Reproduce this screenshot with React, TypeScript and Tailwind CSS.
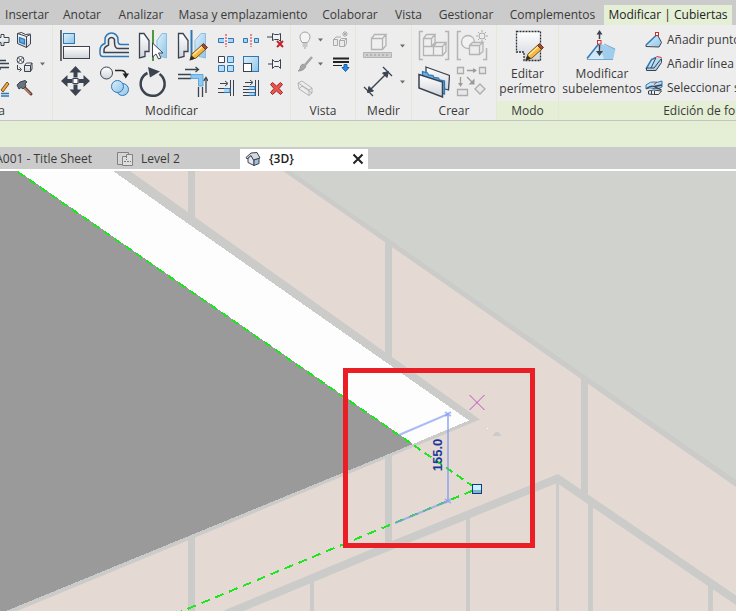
import type { ReactNode } from "react";

const INK = "#3b4350";
const BLUE = "#2f78b7";
const DIM = "#b4b4b4";

interface IconProps {
  size?: number;
  children: ReactNode;
}

function Icon({ size = 18, children }: IconProps) {
  return (
    <svg
      width={size}
      height={size}
      viewBox={`0 0 ${size} ${size}`}
      fill="none"
      aria-hidden="true"
      className="shrink-0"
    >
      {children}
    </svg>
  );
}

function Gradients() {
  return (
    <svg width="0" height="0" className="absolute" aria-hidden="true">
      <defs>
        <linearGradient id="sky" x1="0" y1="0" x2="1" y2="1">
          <stop offset="0" stopColor="#dff1fb" />
          <stop offset="1" stopColor="#8fc4e8" />
        </linearGradient>
        <linearGradient id="steel" x1="0" y1="0" x2="0" y2="1">
          <stop offset="0" stopColor="#ffffff" />
          <stop offset="1" stopColor="#cfd3da" />
        </linearGradient>
      </defs>
    </svg>
  );
}

function Pencil() {
  return (
    <g>
      <path d="M14 30l2-6L27 14l4 4-11 10z" fill="#f7b83b" stroke="#7a5418" />
      <path d="M17 25l10-9" stroke="#ffe9a8" strokeWidth="1.500" />
      <path d="M25.500 15.500l2-2 4 4-2 2z" fill="#a14a35" stroke="#6d3327" />
      <path d="M13.500 30.500l2-5 3.500 3z" fill="#2c2c2c" />
    </g>
  );
}

/* ---------- Modificar, large ---------- */

const AlignIcon = () => (
  <Icon size={32}>
    <path d="M2 0v31" stroke="#222" strokeWidth="1.300" />
    <rect x="4.500" y="3.500" width="11" height="10" fill="url(#sky)" stroke={BLUE} />
    <rect x="4.500" y="16.500" width="26" height="12" fill="url(#steel)" stroke={INK} />
  </Icon>
);

const OffsetIcon = () => (
  <Icon size={32}>
    <path
      d="M31 14.500H23Q20 14.500 20 11V9.500A6.500 6.500 0 0 0 7 9.500V13.500Q2 15 2 20.500V23Q2 26.500 5 26.500H31"
      stroke={BLUE}
      strokeWidth="1.500"
    />
    <path
      d="M31 18.500H20Q16.500 18.500 16.500 12V9.500A3.200 3.200 0 0 0 10.500 9.500V15Q6 17 6 20V22.500H31"
      stroke={INK}
      strokeWidth="1.500"
    />
  </Icon>
);

const MirrorPickIcon = () => (
  <Icon size={32}>
    <path d="M2.500 3.500H7l5 7v11H8v5l-5.500 1.500z" fill="url(#steel)" stroke={INK} strokeWidth="1.300" />
    <path d="M29.500 3.500H25l-5 7v11h4v5l5.500 1.500z" fill="url(#sky)" stroke="#8abde0" />
    <path d="M16 0v31" stroke="#4c9a3a" strokeWidth="2" />
    <path d="M15.500 13v14l3.500-3 2.500 5 2.500-1-2.500-5h4.500z" fill="#fff" stroke={INK} />
  </Icon>
);

const MirrorDrawIcon = () => (
  <Icon size={32}>
    <path d="M2.500 3.500H7l5 7v11H8v5l-5.500 1.500z" fill="url(#steel)" stroke={INK} strokeWidth="1.300" />
    <path d="M29.500 3.500H25l-6 7v11h4v5l6.500 1.500z" fill="url(#sky)" stroke="#8abde0" />
    <path d="M15.500 0v30" stroke={BLUE} strokeWidth="2" />
    <Pencil />
  </Icon>
);

const MoveIcon = () => (
  <Icon size={32}>
    <path
      d="M16.500 0l6 6.500h-4v5h-4v-5h-4zM16.500 30l6-6.500h-4v-5h-4v5h-4zM2 15l6.500-6v4h5v4h-5v4zM31 15l-6.500-6v4h-5v4h5v4z"
      fill={INK}
    />
    <rect x="14" y="12.500" width="5" height="5" fill="#fff" stroke={INK} />
  </Icon>
);

const CopyIcon = () => (
  <Icon size={32}>
    <circle cx="8.500" cy="7" r="6" fill="url(#steel)" stroke={INK} />
    <path d="M17 4.500h6q5 0 5 5" stroke="#222" strokeWidth="1.500" />
    <path d="M24.500 7.500h6.500l-3.200 5z" fill="#222" />
    <circle cx="24.500" cy="23.500" r="6" fill="url(#sky)" stroke={BLUE} />
    <circle cx="19.500" cy="20.500" r="6" fill="url(#sky)" stroke={BLUE} />
  </Icon>
);

const RotateIcon = () => (
  <Icon size={32}>
    <path d="M22.500 8A12 12 0 1 1 10.500 7" stroke={INK} strokeWidth="2.500" />
    <path d="M11 1l12 4.500-10 6z" fill={INK} />
  </Icon>
);

const TrimIcon = () => (
  <Icon size={32}>
    <path d="M9 3.500h13M2 8.500h13M2 12.500h13M22.500 21v10M26.500 21v10M30 27V12" stroke={INK} strokeWidth="1.300" />
    <path d="M19.500 1l3 2.500-3 2.500M27.500 15l2.500-3.500 2 3.500" stroke={INK} strokeWidth="1.300" />
    <path d="M15 8.500h12V20h-4.500v-7.500H15z" fill="#8fc7ee" stroke="#5ea9dd" />
  </Icon>
);

/* ---------- Modificar, small ---------- */

const SplitIcon = () => (
  <Icon>
    <path d="M9 3v13" stroke="#d3242c" strokeDasharray="2 1" />
    <path d="M7 7.500H1.500v4H7M11 7.500h5.500v4H11" fill="#a9d5f2" stroke={BLUE} />
  </Icon>
);

const SplitGapIcon = () => (
  <Icon>
    <path d="M9 3v13" stroke="#d3242c" strokeDasharray="2 1" />
    <path d="M5.500 7.500h-4v4h4zM12.500 7.500h4v4h-4z" fill="#a9d5f2" stroke={BLUE} />
  </Icon>
);

const UnpinIcon = () => (
  <Icon>
    <path d="M0 6h5M5.500 2.500v7l2-1h4l2 2v-8l-2 1h-4z" fill="#f1f1f1" stroke={INK} />
    <path d="M10 10l6 6M16 10l-6 6" stroke="#c32327" strokeWidth="2" />
  </Icon>
);

const ArrayIcon = () => (
  <Icon>
    <path d="M1.500 1.500h6v6h-6z" fill="#fff" stroke={INK} />
    <path d="M10.500 1.500h6v6h-6zM1.500 10.500h6v6h-6zM10.500 10.500h6v6h-6z" fill="#b9ddf4" stroke={BLUE} />
  </Icon>
);

const ScaleIcon = () => (
  <Icon>
    <rect x="1.500" y="1.500" width="15" height="15" fill="url(#sky)" stroke={BLUE} />
    <rect x="1.500" y="8.500" width="8" height="8" fill="#fff" stroke={INK} />
  </Icon>
);

const PinIcon = () => (
  <Icon>
    <path d="M1 9h4M5.500 4.500v9l2-2h4l2 2v-9l-2 2h-4z" fill="#f1f1f1" stroke={INK} />
  </Icon>
);

const TrimSingleIcon = () => (
  <Icon>
    <path d="M3 4.500h7M8 2l3 2.500L8 7M1 9.500h6M1 13.500h6M13.500 1v16M16.500 1v16" stroke={INK} />
    <path d="M7 9.500h6v4H7" fill="#a9d5f2" stroke={BLUE} />
  </Icon>
);

const TrimMultiIcon = () => (
  <Icon>
    <path d="M3 3.500h7M8 1l3 2.500L8 6M1 7.500h6M1 10.500h6M1 13.500h6M1 16.500h6M13.500 1v16M16.500 1v16" stroke={INK} />
    <path d="M7 7.500h6v3H7M7 13.500h6v3H7" fill="#a9d5f2" stroke={BLUE} />
  </Icon>
);

const DeleteIcon = () => (
  <Icon>
    <path
      d="M3.500 5.500l2-2L9.500 7l4-3.500 2 2L12 9.500l3.500 4-2 2-4-3.500-4 3.500-2-2 3.500-4z"
      fill="#e8574f"
      stroke="#a32225"
    />
  </Icon>
);

/* ---------- Geometría ---------- */

const CopeIcon = () => (
  <Icon>
    <path d="M1 6.500h8v-3h3v3h5v5h-5v3H9v-3H1z" fill="url(#steel)" stroke={INK} />
  </Icon>
);

const WallJoinIcon = () => (
  <Icon>
    <path d="M2 5.500h12M2 8.500h15M2 12.500h15M8 12v3" stroke={INK} strokeWidth="1.300" />
  </Icon>
);

const PaintIcon = () => (
  <Icon>
    <path d="M9 11l6-8 2 2-6 8z" fill="#f0a63c" stroke="#7a5418" />
    <path d="M9 14.500h8M9 17h8" stroke={BLUE} strokeWidth="1.300" />
  </Icon>
);

const CutIcon = () => (
  <Icon>
    <path d="M1.500 2.500l9 3v11l-9-4zM10.500 5.500l4-2v9.500l-4 3.500" fill="url(#steel)" stroke={INK} />
    <path d="M1.500 2.500l4-1 4 2 5-.500" stroke={INK} />
    <path d="M3.500 6.500l5 2v4.500l-5-2z" fill="#64aee3" stroke={BLUE} strokeWidth="1.300" />
  </Icon>
);

const JoinIcon = () => (
  <Icon>
    <circle cx="4.500" cy="5" r="3.500" fill="#fff" stroke={INK} />
    <path d="M2 2.500l5 5M7 2.500l-5 5M1.500 10v4.500h3M3.500 12.500l2 2-2 2" stroke={INK} />
    <path d="M8.500 10.500h6v6h-6zM8.500 10.500l2-2.500h5.500l-1.500 2.500M16 8v6l-1.500 2.500" fill="url(#steel)" stroke={INK} />
  </Icon>
);

const HammerIcon = () => (
  <Icon>
    <path d="M8 8l7 7" stroke="#6d4131" strokeWidth="3" strokeLinecap="round" />
    <path d="M8 8.500l6.500 6.500" stroke="#e3b3a4" />
    <path d="M1 6l3-3 5-1.500 2 1.500-2 2 1 2-3 3-2-1.500L3 10z" fill="#6a727c" stroke={INK} />
  </Icon>
);

/* ---------- Vista ---------- */

const BulbIcon = () => (
  <Icon>
    <path d="M6 11.500Q4 8.500 4 6a5 5 0 0 1 10 0q0 2.500-2.500 5.500z" fill="#f4f4f4" stroke="#a5a5a5" />
    <path d="M6.500 13h5M6.500 15h5M8 17h2" stroke="#a5a5a5" />
  </Icon>
);

const BrushIcon = () => (
  <Icon>
    <path d="M16 2l-7 8" stroke="#a5a5a5" strokeWidth="2.500" />
    <path d="M10 11q-2 5-8 5l2-2q0-4 3-5z" fill="#a8a8a8" stroke="#999" />
  </Icon>
);

const HideBoxIcon = () => (
  <Icon>
    <path d="M2 4l11 7v5.500L3 10zM2 4l4-2 10 7v5l-3 2.500M13 11l3-2M3 10l3-3 10 7" stroke={DIM} />
  </Icon>
);

const DisplaceIcon = () => (
  <Icon>
    <path
      d="M1.500 8.500h4v6h-4zM7.500 9.500h5v6h-5zM1.500 8.500L4 6h5M7.500 9.500l2-2h5l-2 2M14.500 7.500v5l-2 3"
      fill="#eaeaea"
      stroke="#aaa"
    />
    <path d="M13 0v6M10 3h6M11 1l4 4M15 1l-4 4" stroke="#aaa" />
  </Icon>
);

const LineweightIcon = () => (
  <Icon>
    <path d="M1 3.500h16M1 7h16" stroke="#222" strokeWidth="2" />
    <path d="M1 10.500h9" stroke="#222" />
    <path d="M12 9.500h3v3h2l-3.500 4-3.500-4h2z" fill="#2f8be0" stroke="#1b5eaa" />
  </Icon>
);

/* ---------- Medir / Crear ---------- */

const MeasureIcon = () => (
  <Icon size={32}>
    <path
      d="M9.500 8.500h11v11h-11zM9.500 8.500l3-4h11.500l-3.500 4M24 4.500v11l-3.500 4"
      fill="#f0f0f0"
      stroke={DIM}
      strokeWidth="1.300"
    />
    <path d="M1.500 22.500h28v5h-28z" fill="#cfcfcf" stroke={DIM} />
    <path d="M5 24v2M9 24v2M13 24v2M17 24v2M21 24v2M25 24v2" stroke="#999" />
  </Icon>
);

const DimensionIcon = () => (
  <Icon size={32}>
    <path d="M6 26L26 6" stroke={INK} strokeWidth="1.500" />
    <path d="M2 21l9 9M21 1l9 9" stroke={INK} strokeWidth="1.300" />
    <path d="M5.500 26.500l1.500-6 4.500 4.500zM26.500 5.500l-1.500 6L20.500 7z" fill={INK} stroke={INK} />
  </Icon>
);

const GroupIcon = () => (
  <Icon size={32}>
    <path d="M5 1.500H1.500v28H5M27 1.500h3.500v28H27" stroke={DIM} strokeWidth="1.500" />
    <path
      d="M5.500 16.500h10v9h-10zM15.500 16.500h9v9h-9zM5.500 8.500h8v8h-8zM5.500 8.500l3-4h8.500l-3.500 4M17 4.500v8l-3.500 4M15.500 16.500l3-4H28l-3.500 4M28 12.500v9l-3.500 4"
      fill="#efefef"
      stroke={DIM}
      strokeWidth="1.300"
    />
  </Icon>
);

const SimilarIcon = () => (
  <Icon size={32}>
    <path d="M5 1.500H1.500v28H5M30.500 18v11.500H27" stroke={DIM} strokeWidth="1.500" />
    <circle cx="12" cy="12" r="6.500" fill="#f2f2f2" stroke={DIM} strokeWidth="1.300" />
    <path
      d="M13.500 15.500h10v9h-10zM13.500 15.500l3-3H27l-3.500 3M27 12.500v9l-3.500 3"
      fill="#ececec"
      stroke={DIM}
      strokeWidth="1.300"
    />
    <circle cx="26" cy="6" r="3" stroke="#aaa" />
    <path
      d="M26 0v2M26 10v2M20 6h2M30 6h2M22 2l1.500 1.500M28.500 8.500L30 10M30 2l-1.500 1.500M23.500 8.500L22 10"
      stroke="#aaa"
    />
  </Icon>
);

const AssemblyIcon = () => (
  <Icon size={32}>
    <path d="M8 1l23.500 8.500-1 14.500-3.500-1L8 12z" fill="url(#steel)" stroke={INK} strokeWidth="1.300" />
    <path d="M4.500 5.500l5 1.500 1 2 4.500.500 1 2 4.500.500 1 2 5 1v13l-22-9z" fill="#67b0e6" stroke={BLUE} strokeWidth="1.300" />
    <path d="M1 8.500L24.500 16v15L1 22z" fill="url(#steel)" stroke={INK} strokeWidth="1.500" />
  </Icon>
);

const PartsIcon = () => (
  <Icon size={32}>
    <path
      d="M1.500 1.500h6v6h-6zM23.500 1.500h6v6h-6zM1.500 23.500h10v6h-10zM24 18l5 5-5 5-5-5z"
      fill="#e8e8e8"
      stroke="#adadad"
      strokeWidth="1.300"
    />
    <path d="M11 4.500h8M4.500 11v7M11 11l5 5" stroke="#9b9b9b" strokeWidth="1.300" />
    <path d="M17 2l4 2.500L17 7zM2 17h5l-2.500 4zM18.500 12.500v6h-6z" fill="#9b9b9b" />
  </Icon>
);

/* ---------- Modo / Edición de forma ---------- */

const FootprintIcon = () => (
  <Icon size={32}>
    <path d="M4.500 1.500h24v29H12v-8.500H4.500z" fill="url(#steel)" />
    <path
      d="M4.500 1.500h24v29H12v-8.500H4.500z"
      stroke="#2b2f36"
      strokeWidth="1.300"
      strokeDasharray="2 1"
    />
    <Pencil />
  </Icon>
);

const SubelementIcon = () => (
  <Icon size={32}>
    <path d="M1 28.500L13 13.500l10 15z" fill="#cfe7f6" />
    <path d="M13 13.500L29.500 19 27 29.500h-9z" fill="#9fcdec" />
    <path d="M1 28.500L13 13.500" stroke={BLUE} strokeWidth="1.500" />
    <path d="M1 29.500h26M18 14l11 5" stroke="#73a9cf" />
    <path d="M13.500 9V3M13.500 15v8" stroke={INK} strokeWidth="1.500" />
    <path d="M13.500 0l3 4.500h-6zM13.500 26l3.500-5h-7z" fill={INK} />
    <rect x="11.500" y="10.500" width="3.500" height="3.500" fill="#fff" stroke="#cf2e2e" />
  </Icon>
);

const AddPointIcon = () => (
  <Icon>
    <path d="M1 14L12 4l4.500 7.500-2.500 4.500z" fill="url(#sky)" />
    <path d="M1 14L11.500 4" stroke={BLUE} strokeWidth="1.500" />
    <path d="M12.500 4l4 7.500-2.500 4.500-13-.500V14" stroke={INK} />
    <rect x="10.500" y="1.500" width="3" height="3" fill="#fff" stroke="#cf2e2e" />
  </Icon>
);

const AddLineIcon = () => (
  <Icon>
    <path d="M1 13L6.500 4 11 2.500l5.500 1v4L11 15.500H2z" fill="url(#sky)" />
    <path d="M1 14l5.500-9.500L11 2.500" stroke={BLUE} strokeWidth="1.500" />
    <path d="M11 2.500L6 13M16.500 3.500v4L11 15.500H1.500V13H9l7-9" stroke={INK} />
    <path d="M11.500 1.500l5 1" stroke="#cf2e2e" />
  </Icon>
);

const PickSupportIcon = () => (
  <Icon>
    <path d="M1 6q5-4 8-3t8-1v6q-4 3-8 1.500T1 10z" fill="url(#sky)" stroke={BLUE} />
    <path d="M1.500 9.500Q6 6 9 7.500t7.500 3.500M9 7.500l8-1.500" stroke={INK} strokeWidth="1.300" />
    <path d="M3.500 12l5-1 8 1-3 3.500H8.500l-5-.500z" fill="#eee" stroke={INK} />
    <path d="M6.500 12v3M9.500 12v3" stroke={INK} />
    <path d="M9 5.500l3-2.500" stroke="#cf2e2e" />
  </Icon>
);

const LevelViewIcon = () => (
  <Icon size={16}>
    <path d="M0.500 1.500h11v12h-11z" fill="#d5d5d5" stroke="#828282" />
    <path d="M5.500 5.500h4v-2h6v11h-10z" fill="#dedede" stroke="#828282" />
    <path d="M7 10.500h7M9.500 5v4" stroke="#777" strokeDasharray="2 1" />
  </Icon>
);

const HouseViewIcon = () => (
  <Icon size={16}>
    <path d="M3 7l3-2.500L9 9v5.500l-6-3z" fill="#e4e8ee" stroke={INK} />
    <path d="M9 9l5-2v5.500l-5 2z" fill="#a4bddb" stroke={INK} />
    <path d="M1 6.500L6 2l6-.500L15 7 8.500 9 6 4.500 2 8z" fill="#d4d9e1" stroke={INK} />
  </Icon>
);

function Caret() {
  return (
    <svg width="5" height="4" viewBox="0 0 5 4" aria-hidden="true" className="shrink-0">
      <path d="M0 0.500h5L2.500 3.500z" fill="#6c6c6c" />
    </svg>
  );
}

interface ToolProps {
  name: string;
  icon: ReactNode;
  caret?: boolean;
  className?: string;
}

function Tool({ name, icon, caret, className = "justify-center gap-2" }: ToolProps) {
  return (
    <button type="button" aria-label={name} className={`flex items-center ${className}`}>
      {icon}
      {caret && <Caret />}
    </button>
  );
}

interface PanelProps {
  title: string;
  contextual?: boolean;
  className?: string;
  titleClass?: string;
  children: ReactNode;
}

function Panel({ title, contextual, className = "", titleClass = "justify-center", children }: PanelProps) {
  return (
    <section className={`flex shrink-0 flex-col border-r border-[#e3e8db] pt-[3px] ${className}`}>
      <div className="flex h-[73px] items-start">{children}</div>
      <h2 className={`flex h-[19px] items-center leading-4 ${titleClass} ${contextual ? "bg-[#e4efd6]" : ""}`}>
        {title}
      </h2>
    </section>
  );
}

const ribbonTabs = [
  "Insertar",
  "Anotar",
  "Analizar",
  "Masa y emplazamiento",
  "Colaborar",
  "Vista",
  "Gestionar",
  "Complementos",
];

const geometryTools = [
  { name: "Recortar", icon: <CopeIcon /> },
  { name: "Cortar", icon: <CutIcon /> },
  { name: "Uniones de muro", icon: <WallJoinIcon /> },
  { name: "Unir", icon: <JoinIcon />, caret: true },
  { name: "Pintar", icon: <PaintIcon /> },
  { name: "Derribar", icon: <HammerIcon /> },
];

const largeModifyTools = [
  { name: "Alinear", icon: <AlignIcon /> },
  { name: "Desfase", icon: <OffsetIcon /> },
  { name: "Simetría: seleccionar eje", icon: <MirrorPickIcon /> },
  { name: "Simetría: dibujar eje", icon: <MirrorDrawIcon /> },
  { name: "Mover", icon: <MoveIcon /> },
  { name: "Copiar", icon: <CopyIcon /> },
  { name: "Rotar", icon: <RotateIcon /> },
  { name: "Recortar en esquina", icon: <TrimIcon /> },
];

const smallModifyTools = [
  { name: "Dividir elemento", icon: <SplitIcon /> },
  { name: "Dividir con hueco", icon: <SplitGapIcon /> },
  { name: "Desbloquear", icon: <UnpinIcon /> },
  { name: "Matriz", icon: <ArrayIcon /> },
  { name: "Escala", icon: <ScaleIcon /> },
  { name: "Bloquear", icon: <PinIcon /> },
  { name: "Alargar un elemento", icon: <TrimSingleIcon /> },
  { name: "Alargar varios elementos", icon: <TrimMultiIcon /> },
  { name: "Suprimir", icon: <DeleteIcon /> },
];

const shapeTools = [
  { name: "Añadir punto", icon: <AddPointIcon /> },
  { name: "Añadir línea de división", icon: <AddLineIcon /> },
  { name: "Seleccionar soportes", icon: <PickSupportIcon /> },
];

function RibbonTabs() {
  return (
    <nav className="grid h-[25px] grid-cols-[54fr_56fr_62fr_142fr_72fr_45fr_70fr_103fr_128fr_4fr] items-end bg-[#cbcbcb]">
      {ribbonTabs.map((tab) => (
        <button key={tab} type="button" className="h-5 min-w-0 whitespace-nowrap">
          {tab}
        </button>
      ))}
      <button type="button" className="h-5 min-w-0 bg-[#e4efd6] whitespace-nowrap text-[#222]">
        Modificar | Cubiertas
      </button>
    </nav>
  );
}

function Ribbon() {
  return (
    <div className="flex overflow-hidden border-b border-[#c3c3c3] bg-[#ededed]">
      <Panel title="Geometría" className="w-[53px] overflow-hidden" titleClass="justify-end pr-[47px]">
        <div className="flex w-full justify-end">
          <div className="grid shrink-0 grid-cols-[24px_36px] grid-rows-[24px_24px_24px]">
            {geometryTools.map((tool) => (
              <Tool key={tool.name} {...tool} className="justify-start gap-1.5" />
            ))}
          </div>
        </div>
      </Panel>

      <Panel title="Modificar" className="w-[238px]">
        <div className="grid grid-cols-[39px_39px_39px_39px] grid-rows-[36px_36px] pl-[2px]">
          {largeModifyTools.map((tool) => (
            <Tool key={tool.name} {...tool} />
          ))}
        </div>
        <div className="grid grid-cols-[25px_25px_25px] grid-rows-[24px_24px_24px] pl-[2px]">
          {smallModifyTools.map((tool) => (
            <Tool key={tool.name} {...tool} />
          ))}
        </div>
      </Panel>

      <Panel title="Vista" className="w-[65px]">
        <div className="grid grid-cols-[36px_18px] grid-rows-[24px_24px_24px] pl-[5px]">
          <Tool name="Ocultar" icon={<BulbIcon />} caret className="justify-start gap-1" />
          <Tool name="Desplazar" icon={<DisplaceIcon />} />
          <Tool name="Modificar gráficos" icon={<BrushIcon />} caret className="justify-start gap-1" />
          <Tool name="Estilo de línea" icon={<LineweightIcon />} />
          <Tool name="Caja de selección" icon={<HideBoxIcon />} className="justify-start" />
        </div>
      </Panel>

      <Panel title="Medir" className="w-[56px]">
        <div className="grid grid-rows-[36px_36px] pl-1.5">
          <Tool name="Medir" icon={<MeasureIcon />} caret className="gap-1.5" />
          <Tool name="Cota" icon={<DimensionIcon />} caret className="gap-1.5" />
        </div>
      </Panel>

      <Panel title="Crear" className="w-[85px]">
        <div className="grid grid-cols-[38px_38px] grid-rows-[36px_36px] pl-[3px]">
          <Tool name="Crear grupo" icon={<GroupIcon />} />
          <Tool name="Crear similar" icon={<SimilarIcon />} />
          <Tool name="Crear montaje" icon={<AssemblyIcon />} />
          <Tool name="Crear piezas" icon={<PartsIcon />} />
        </div>
      </Panel>

      <Panel title="Modo" contextual className="w-[62px]">
        <button type="button" className="flex w-full flex-col items-center gap-1 pt-0.5 leading-[15px]">
          <FootprintIcon />
          <span className="w-min">Editar perímetro</span>
        </button>
      </Panel>

      <Panel title="Edición de forma" contextual className="w-[304px]">
        <button type="button" className="flex w-[86px] shrink-0 flex-col items-center gap-1 pt-0.5 leading-[15px]">
          <SubelementIcon />
          <span className="w-min">Modificar subelementos</span>
        </button>
        <div className="grid grid-rows-[24px_24px_24px]">
          {shapeTools.map((tool) => (
            <button
              key={tool.name}
              type="button"
              className="flex items-center gap-1 whitespace-nowrap"
            >
              {tool.icon}
              {tool.name}
            </button>
          ))}
        </div>
      </Panel>
    </div>
  );
}

function ViewTabs() {
  return (
    <nav className="flex h-[24px] items-end border-b-2 border-white bg-[#cbcbcb]">
      <button
        type="button"
        className="flex h-5 w-28 items-center justify-end overflow-hidden pr-5 whitespace-nowrap"
      >
        A001 - Title Sheet
      </button>
      <button type="button" className="flex h-5 w-32 items-center gap-2 pl-[5px]">
        <LevelViewIcon />
        Level 2
      </button>
      <div className="flex h-5 w-32 items-center bg-white pr-1 pl-[5px]">
        <button type="button" className="flex flex-1 items-center gap-2 font-semibold text-[#222]">
          <HouseViewIcon />
          {"{3D}"}
        </button>
        <button type="button" aria-label="Cerrar vista">
          <svg width="12" height="12" viewBox="0 0 12 12" aria-hidden="true">
            <path d="M1.500 1.500l9 9M10.500 1.500l-9 9" stroke="#222" strokeWidth="2" />
          </svg>
        </button>
      </div>
    </nav>
  );
}

function ModelView() {
  return (
    <svg
      viewBox="0 0 736 440"
      preserveAspectRatio="xMinYMin slice"
      className="block w-full"
      role="img"
      aria-label="Vista 3D de la cubierta"
    >
      <rect width="736" height="440" fill="#e5d9d3" />

      {/* vertical joints of the wall panels */}
      <g fill="#cbcbca">
        <rect x="188" y="0" width="7" height="50" />
        <rect x="188" y="365" width="7" height="75" />
        <rect x="385" y="68" width="7" height="120" />
        <rect x="385" y="285" width="7" height="90" />
        <rect x="581" y="206" width="7" height="122" />
        <rect x="310" y="404" width="4" height="36" />
        <rect x="466" y="342" width="4" height="98" />
        <rect x="556" y="308" width="3" height="132" />
        <rect x="588" y="330" width="5" height="110" />
        <rect x="708" y="412" width="5" height="28" />
      </g>

      {/* ground behind the roof */}
      <path d="M283 0L736 316V0z" fill="#cbcbca" />
      <path d="M291 0L736 309V0z" fill="#d0d3cd" />

      {/* roof opening */}
      <path d="M112 0h18l350 248.500L17 440H0V0z" fill="#cbcbca" />
      <path d="M0 0h113l356 249.500L413 273z" fill="#fdfdfd" shapeRendering="crispEdges" />
      <path d="M0 0h18l395 273L6 440H0z" fill="#9a9a9a" shapeRendering="crispEdges" />

      <path d="M226 443L368 384 557.500 307.500 740 432" stroke="#cbcbca" strokeWidth="8" fill="none" />

      <g stroke="#1ee61e" strokeWidth="2" fill="none" shapeRendering="crispEdges">
        <path d="M18 1L477 318" strokeDasharray="8 5" />
        <path d="M473 319.500L180 441" strokeDasharray="9 6" />
      </g>

      {/* temporary dimension */}
      <g stroke="#7f98f0" strokeOpacity="0.650" strokeWidth="2" fill="none">
        <path d="M399 264L448 243V330L395 352" />
        <path d="M445 241l6 4M451 241l-6 4M445 328l6 4M451 328l-6 4" />
      </g>
      <text
        transform="translate(442 284) rotate(-90)"
        textAnchor="middle"
        fill="#17389b"
        className="font-['Liberation_Sans',sans-serif] text-[13px] font-bold"
      >
        155.0
      </text>

      <path d="M469.500 224l15 15M484.500 224l-15 15" stroke="#c04fc0" fill="none" />
      <path d="M493 265q1-4 4-4t4 4z" fill="#cbcbca" />
      <rect x="487" y="257" width="1" height="1" fill="#fff" />

      <rect x="472.500" y="313.500" width="9" height="9" fill="#c9f2fa" />
      <rect x="473" y="319" width="8" height="3" fill="#7fb5cf" />
      <rect x="472.500" y="313.500" width="9" height="9" stroke="#0e3a86" fill="none" />

      <rect x="345.500" y="199.500" width="187" height="175" stroke="#ea1f26" strokeWidth="5" fill="none" />
    </svg>
  );
}

export default function App() {
  return (
    <div className="overflow-hidden bg-[#e5d9d3] font-['Open_Sans',sans-serif] text-[12px] text-[#3a3a3a]">
      <Gradients />
      <RibbonTabs />
      <Ribbon />
      <div className="h-[26px] bg-[#e4efd6]" />
      <ViewTabs />
      <ModelView />
    </div>
  );
}
